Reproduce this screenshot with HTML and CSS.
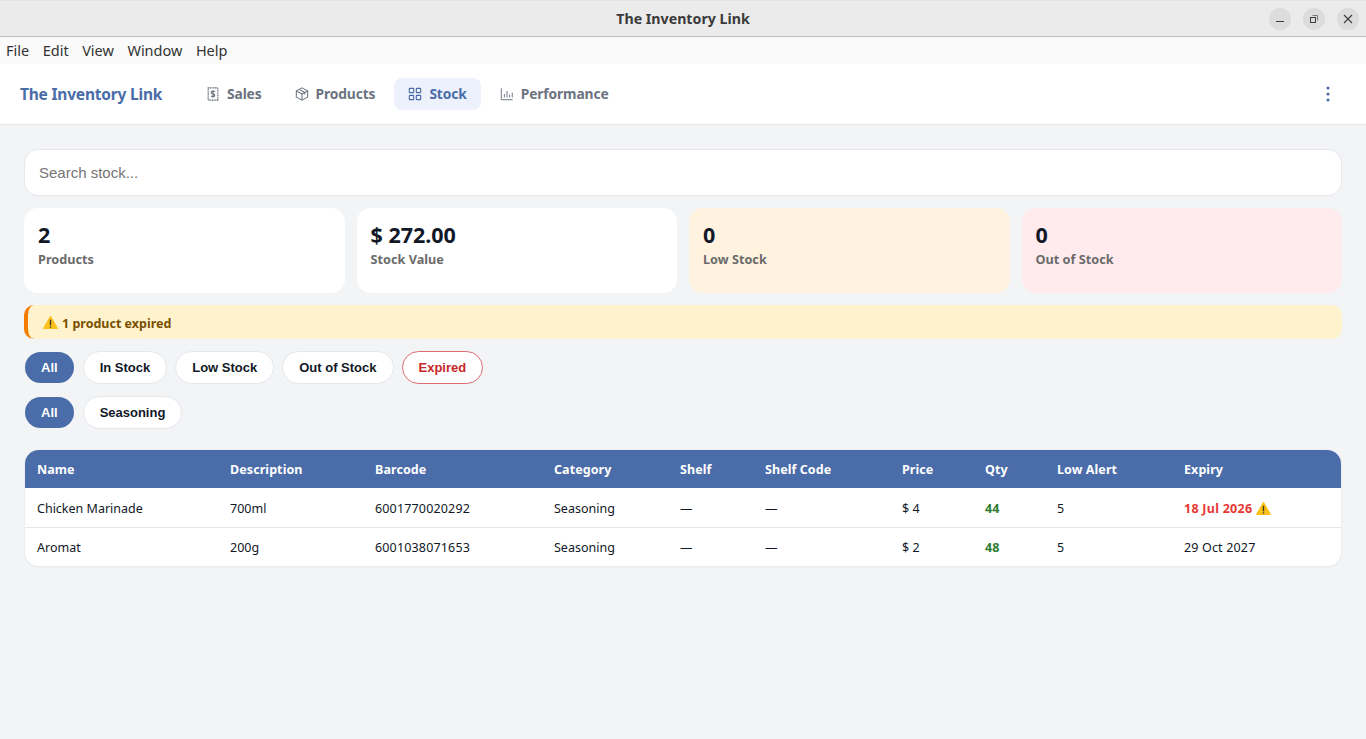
FILE: index.html
```html
<!DOCTYPE html>
<html lang="en">
<head>
<meta charset="utf-8">
<title>The Inventory Link</title>
<link rel="stylesheet" href="styles.css">
</head>
<body>
<header class="titlebar">
  <div class="title">The Inventory Link</div>
  <div class="winbtns">
    <span class="winbtn"><svg width="10" height="10" viewBox="0 0 10 10"><path d="M1 7.500h8" stroke="#3d3d3d" stroke-width="1"/></svg></span>
    <span class="winbtn"><svg width="10" height="10" viewBox="0 0 10 10" fill="none" stroke="#3d3d3d" stroke-width="1"><rect x="1.500" y="3.500" width="5" height="5"/><path d="M3.500 1.500h5v5" stroke="#777"/></svg></span>
    <span class="winbtn"><svg width="10" height="10" viewBox="0 0 10 10"><path d="M1 1l8 8M9 1l-8 8" stroke="#3d3d3d" stroke-width="1.100"/></svg></span>
  </div>
</header>
<nav class="menubar">
  <span>File</span><span>Edit</span><span>View</span><span>Window</span><span>Help</span>
</nav>
<div class="navbar">
  <div class="brand">The Inventory Link</div>
  <div class="tabs">
    <a class="tab"><svg class="ico" viewBox="0 0 16 16" fill="none" stroke="currentColor" stroke-width="1.300"><path d="M2.500 1h11v14h-11z" stroke-dasharray="1.400 .5"/><path d="M10 5.600c-.4-.7-1-.9-2-.9-1.200 0-2 .5-2 1.500 0 2.200 4 1 4 3.300 0 1-.8 1.500-2 1.500-1 0-1.700-.3-2-1M8 3.600v8.800"/></svg><span class="tl">Sales</span></a>
    <a class="tab"><svg class="ico" viewBox="0 0 16 16" fill="none" stroke="currentColor" stroke-width="1.200" stroke-linejoin="round"><path d="M8 1l6.500 3.400v7.200L8 15l-6.500-3.400V4.400z"/><path d="M1.500 4.400L8 8l6.500-3.600M8 8v7M4.800 2.700l6.400 3.600v2.400"/></svg><span class="tl">Products</span></a>
    <a class="tab tab-active"><svg class="ico" viewBox="0 0 16 16" fill="none" stroke="currentColor" stroke-width="1.300"><rect x="1.500" y="1.500" width="5" height="5" rx=".8"/><rect x="9.500" y="1.500" width="5" height="5" rx=".8"/><rect x="1.500" y="9.500" width="5" height="5" rx=".8"/><rect x="9.500" y="9.500" width="5" height="5" rx=".8"/></svg><span class="tl">Stock</span></a>
    <a class="tab"><svg class="ico" viewBox="0 0 16 16" fill="none" stroke="currentColor" stroke-width="1.100"><path d="M1.500 1.500v13h13M5 8v4M8 4.500V12M11 9v3M14 6.500V12"/></svg><span class="tl">Performance</span></a>
  </div>
  <button class="more" aria-label="More"><svg width="4" height="16" viewBox="0 0 4 16" fill="#4a6ca8"><circle cx="2" cy="2" r="1.600"/><circle cx="2" cy="8" r="1.600"/><circle cx="2" cy="14" r="1.600"/></svg></button>
</div>
<main class="content">
  <input class="search" type="text" placeholder="Search stock...">
  <section class="cards">
    <div class="card"><div class="num">2</div><div class="lbl">Products</div></div>
    <div class="card"><div class="num">$ 272.00</div><div class="lbl">Stock Value</div></div>
    <div class="card card-low"><div class="num">0</div><div class="lbl">Low Stock</div></div>
    <div class="card card-out"><div class="num">0</div><div class="lbl">Out of Stock</div></div>
  </section>
  <div class="alert"><svg class="warn" viewBox="0 0 16 15"><path d="M8 1.200L15.200 13.800H.8z" fill="#fcc21b" stroke="#fcc21b" stroke-width="1.400" stroke-linejoin="round"/><path d="M8 4.500v6" stroke="#3f3a2c" stroke-width="1.500"/><circle cx="8" cy="12.300" r=".9" fill="#3f3a2c"/></svg><span class="tl-alert">1 product expired</span></div>
  <div class="pills">
    <button class="pill pill-on">All</button>
    <button class="pill">In Stock</button>
    <button class="pill">Low Stock</button>
    <button class="pill">Out of Stock</button>
    <button class="pill pill-exp">Expired</button>
  </div>
  <div class="pills">
    <button class="pill pill-on">All</button>
    <button class="pill">Seasoning</button>
  </div>
  <div class="tablewrap">
    <table>
      <colgroup>
        <col class="c1"><col class="c2"><col class="c3"><col class="c4"><col class="c5"><col class="c6"><col class="c7"><col class="c8"><col class="c9"><col>
      </colgroup>
      <thead>
        <tr><th>Name</th><th>Description</th><th>Barcode</th><th>Category</th><th>Shelf</th><th>Shelf Code</th><th>Price</th><th>Qty</th><th>Low Alert</th><th>Expiry</th></tr>
      </thead>
      <tbody>
        <tr><td>Chicken Marinade</td><td>700ml</td><td class="wide">6001770020292</td><td>Seasoning</td><td>—</td><td>—</td><td>$ 4</td><td class="qty">44</td><td>5</td><td><span class="expired">18 Jul 2026</span><svg class="warn warn-t" viewBox="0 0 16 15"><path d="M8 1.200L15.200 13.800H.8z" fill="#fcc21b" stroke="#fcc21b" stroke-width="1.400" stroke-linejoin="round"/><path d="M8 4.500v6" stroke="#3f3a2c" stroke-width="1.500"/><circle cx="8" cy="12.300" r=".9" fill="#3f3a2c"/></svg></td></tr>
        <tr><td>Aromat</td><td>200g</td><td class="wide">6001038071653</td><td>Seasoning</td><td>—</td><td>—</td><td>$ 2</td><td class="qty">48</td><td>5</td><td class="wide">29 Oct 2027</td></tr>
      </tbody>
    </table>
  </div>
</main>
</body>
</html>
```
FILE: styles.css
```css
* { box-sizing: border-box; }
html, body { margin: 0; height: 100%; }
body {
  background: #f3f4f6;
  font-family: "Noto Sans", "DejaVu Sans", sans-serif;
  color: #111827;
  overflow: hidden;
}
.titlebar {
  height: 37px;
  background: #ebebeb;
  border-top: 1px solid #e2e2e2;
  border-bottom: 1px solid #bdbdbd;
  display: flex;
  align-items: center;
  justify-content: center;
  position: relative;
}
.title { font-size: 14.200px; font-weight: 700; color: #3a3a3a; }
.winbtns { position: absolute; right: 7px; top: 7px; display: flex; gap: 12px; }
.winbtn {
  width: 22px; height: 22px; border-radius: 50%;
  background: #dcdcdc;
  display: flex; align-items: center; justify-content: center;
}
.menubar {
  height: 27px;
  background: #fafafa;
  display: flex;
  align-items: center;
  gap: 13.500px;
  padding: 0 0 2px 6px;
  font-size: 14.500px;
  color: #333;
}
.navbar {
  height: 61px;
  background: #fff;
  border-bottom: 1px solid #e5e7eb;
  display: flex;
  align-items: center;
  padding: 0 20px;
}
.brand {
  font-size: 15.500px;
  letter-spacing: -.2px;
  font-weight: 700;
  color: #4a6ca8;
  width: 171.500px;
}
.tabs { display: flex; gap: 4px; flex: 1; }
.tab {
  display: flex; align-items: center; gap: 7px;
  height: 32px;
  padding: 0 14.500px;
  border-radius: 8px;
  font-size: 13.800px;
  letter-spacing: -.12px;
  font-weight: 700;
  color: #6b7280;
}
.tl { padding-bottom: 2px; }
.ico { width: 14px; height: 14px; flex: none; }
.tab-active { background: #ecf1fc; color: #4a6ca8; }
.more {
  border: 0; background: none; padding: 0;
  width: 16px; height: 20px;
  display: flex; align-items: center; justify-content: center;
  margin-right: 10px;
}
.content { padding: 24px 24px 0; display: flex; flex-direction: column; }
.search {
  height: 47px;
  border: 1px solid #e5e7eb;
  border-radius: 14px;
  background: #fff;
  padding: 0 14px;
  font-family: "Liberation Sans", Arial, sans-serif;
  font-size: 15px;
  color: #111827;
  outline: 0;
  display: block;
  width: 100%;
}
.search::placeholder { color: #757575; opacity: 1; }
.cards {
  display: grid;
  grid-template-columns: repeat(4, 1fr);
  gap: 12px;
  margin-top: 12px;
}
.card {
  height: 85px;
  background: #fff;
  border-radius: 14px;
  padding: 13px 14px;
}
.card-low { background: #fff3e0; }
.card-out { background: #ffebee; }
.num { font-size: 21.500px; font-weight: 700; line-height: 27px; color: #111827; }
.lbl { font-size: 12.700px; font-weight: 700; line-height: 18px; margin-top: 2px; color: #6b6b6b; }
.alert {
  height: 34px;
  margin-top: 12px;
  background: #fff3cd;
  border-left: 4px solid #f57c00;
  border-radius: 10px;
  display: flex;
  align-items: center;
  padding-left: 15px;
  font-size: 12.500px;
  font-weight: 700;
  color: #7a4f00;
}
.tl-alert { padding-top: 2px; }
.warn { width: 15px; height: 15px; margin-right: 4px; flex: none; }
.warn-t { margin: 0 0 0 4px; vertical-align: -3px; }
.pills { display: flex; gap: 8px; margin-top: 12px; }
.pill {
  height: 33px;
  padding: 0 16px;
  border: 1px solid #e5e7eb;
  border-radius: 17px;
  background: #fff;
  font-family: "Liberation Sans", Arial, sans-serif;
  font-size: 13px;
  font-weight: 700;
  color: #111827;
}
.pill-on {
  background: #4a6ca8;
  background-clip: padding-box;
  border-color: transparent;
  color: #fff;
}
.pill-exp { border-color: #dc6b72; color: #c62828; }
.tablewrap {
  margin-top: 21px;
  margin-left: 1px;
  background: #fff;
  border-radius: 14px;
  overflow: hidden;
  box-shadow: 0 0 0 1px #eceef1, 0 1px 2px rgba(0, 0, 0, .08);
  width: 1316px;
}
table { width: 100%; border-collapse: collapse; table-layout: fixed; font-size: 12.500px; }
.c1 { width: 193px; }
.c2 { width: 145px; }
.c3 { width: 179px; }
.c4 { width: 126px; }
.c5 { width: 85px; }
.c6 { width: 137px; }
.c7 { width: 83px; }
.c8 { width: 72px; }
.c9 { width: 127px; }
th {
  height: 38px;
  background: #4a6ca8;
  color: #fff;
  text-align: left;
  padding: 0 12px;
  font-weight: 700;
  letter-spacing: .08px;
}
td {
  height: 39px;
  padding: 2px 12px 0;
  color: #111827;
  border-bottom: 1px solid #e5e7eb;
}
tbody tr:last-child td { border-bottom: 0; }
.wide { letter-spacing: .16px; }
.qty { color: #2e7d32; font-weight: 700; }
.expired { color: #e53935; font-weight: 700; letter-spacing: .27px; }
```
